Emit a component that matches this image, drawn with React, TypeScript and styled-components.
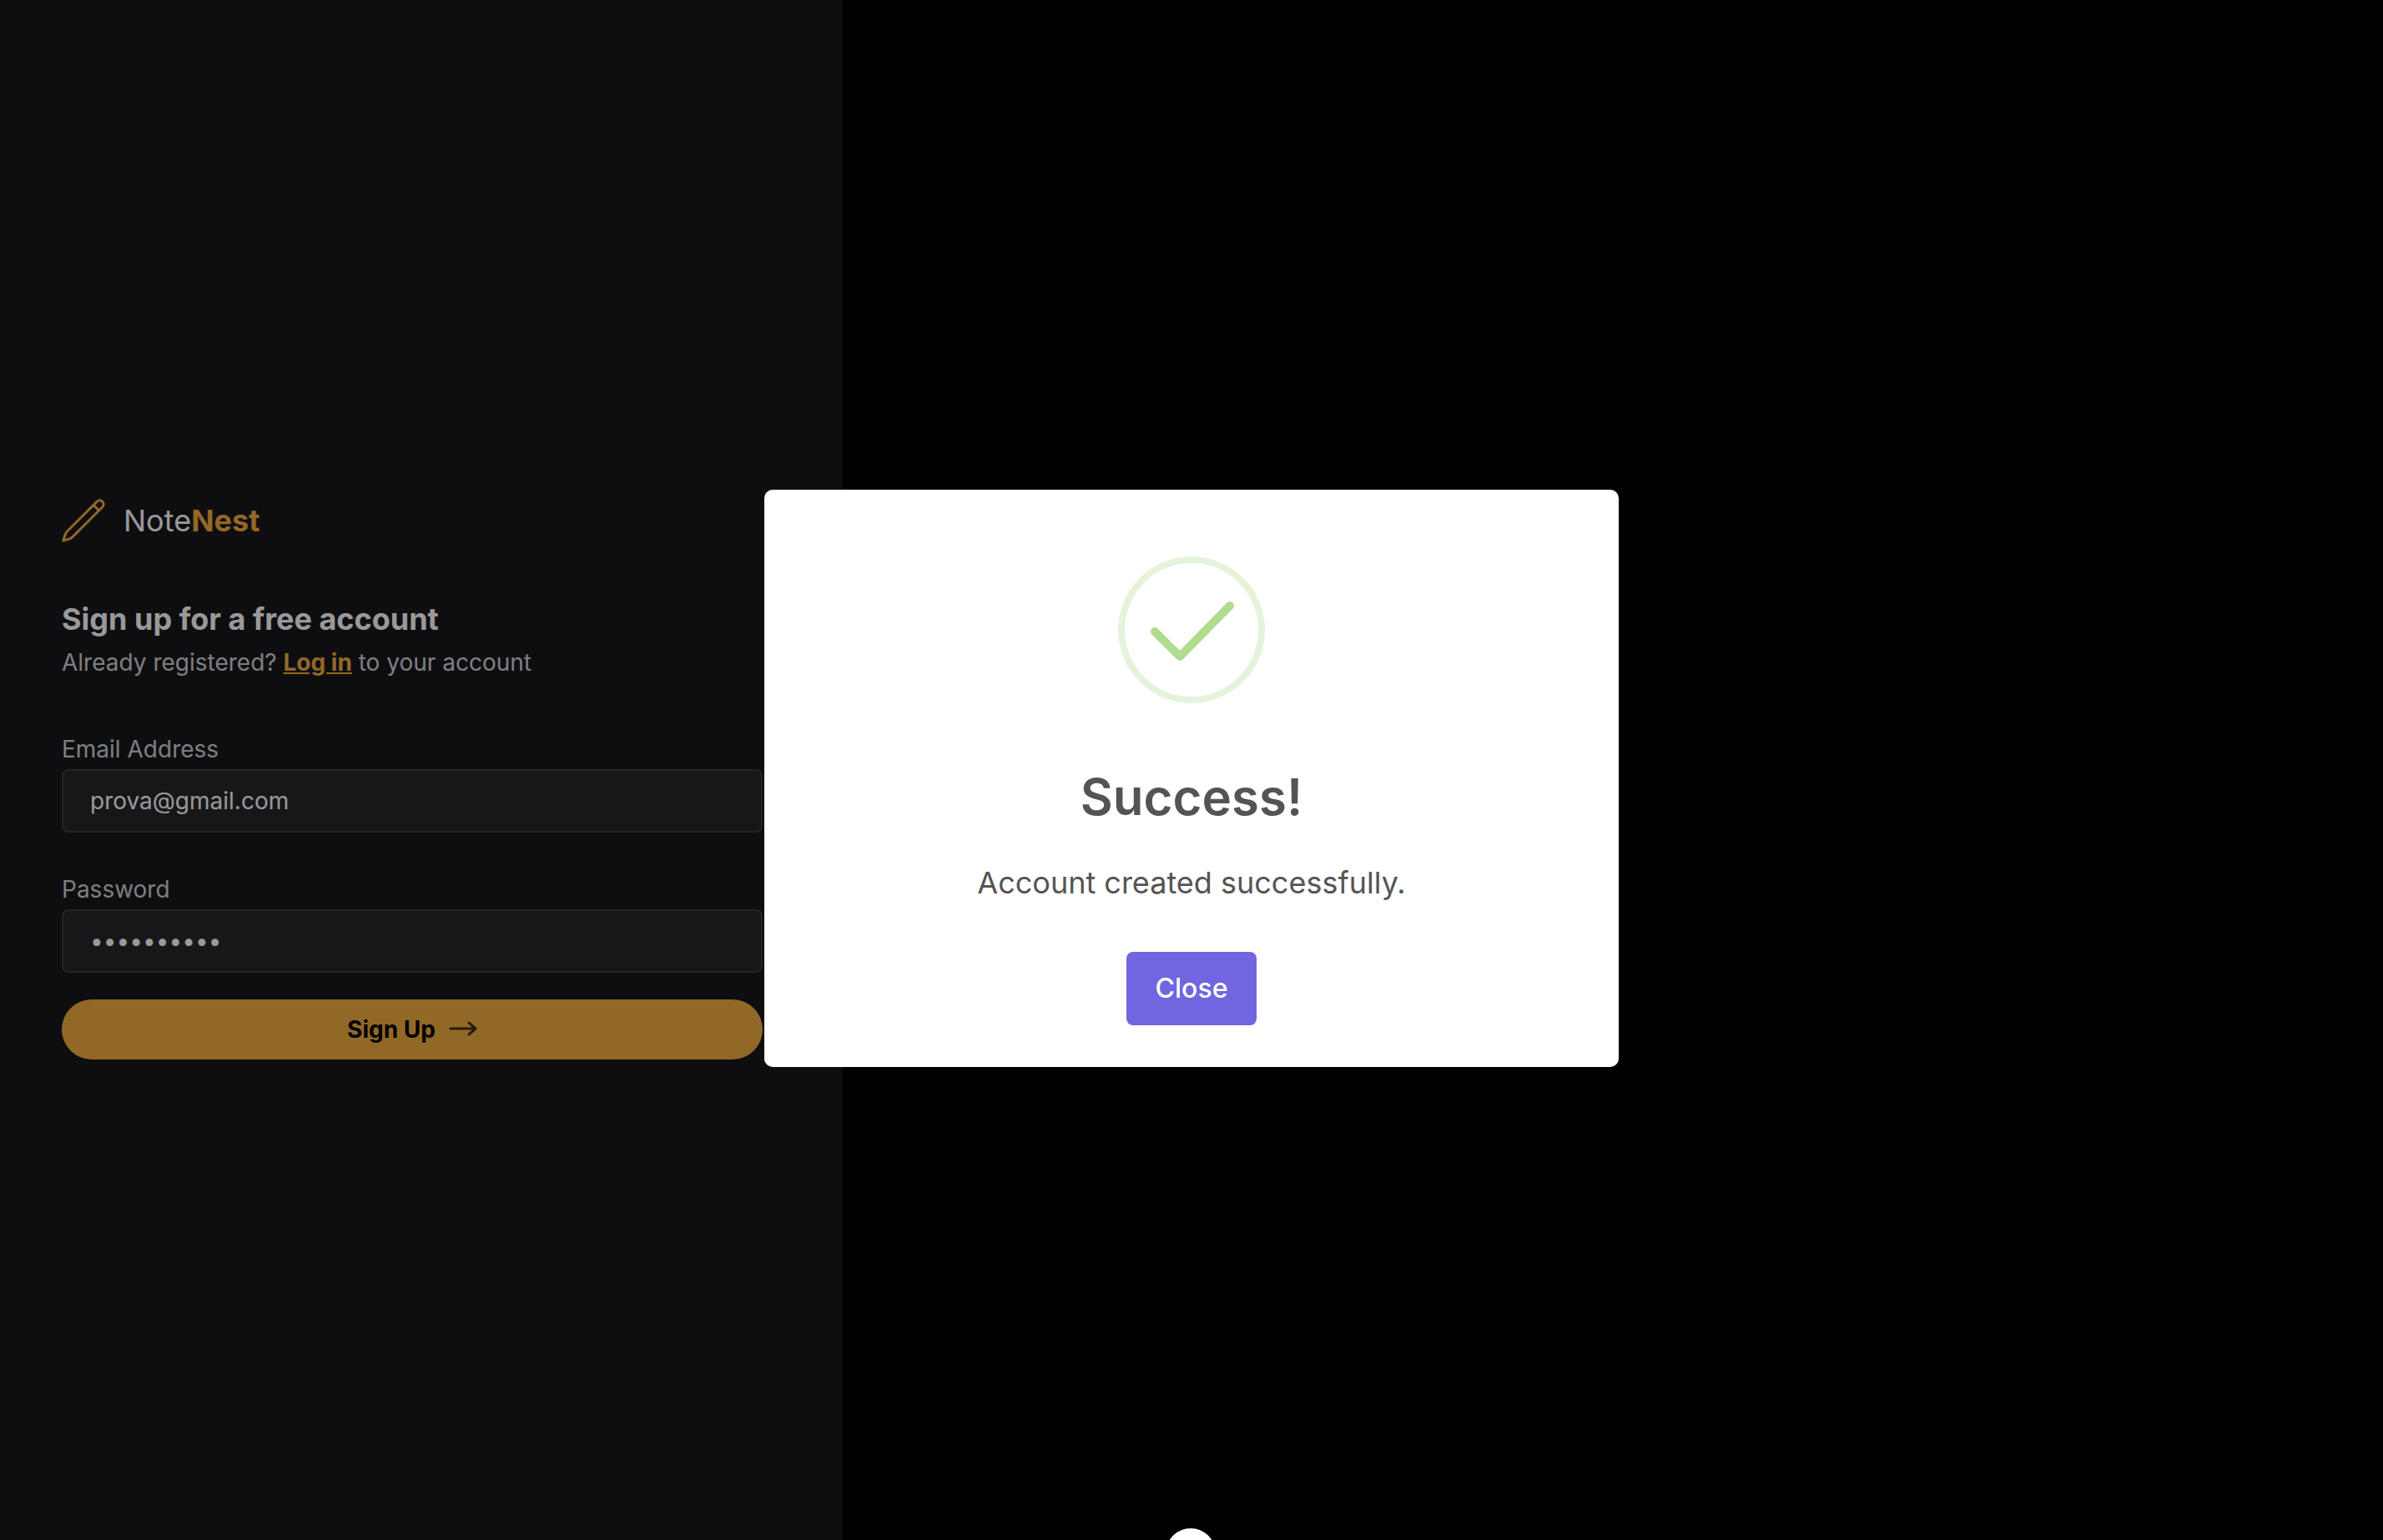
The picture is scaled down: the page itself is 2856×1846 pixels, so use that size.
import React, { useState } from "react";
import styled, { createGlobalStyle } from "styled-components";

const GlobalStyle = createGlobalStyle`
  *, *::before, *::after { box-sizing: border-box; }
  html, body, #root { height: 100%; }
  body {
    margin: 0;
    background: #000;
    font-family: Inter, "Liberation Sans", sans-serif;
    overflow: hidden;
  }
`;

const Page = styled.div`
  display: flex;
  min-height: 100vh;
  background: #000;
`;

const Panel = styled.main`
  display: flex;
  flex-direction: column;
  justify-content: center;
  padding: 18px 96px 0 74px;
  background: #18181b;
`;

const Content = styled.div`
  display: flex;
  flex-direction: column;
  width: 840px;
  max-width: 100%;
`;

const Brand = styled.div`
  display: flex;
  align-items: center;
  gap: 22px;
  height: 60px;
  color: #fff;
  font-size: 36px;
  line-height: 56px;
`;

const BrandAccent = styled.span`
  color: #f4ae41;
  font-weight: 700;
`;

const PencilIcon = styled.svg`
  width: 52px;
  height: 52px;
  color: #f4ae41;
`;

const Heading = styled.h1`
  margin: 60px 0 0;
  color: #fff;
  font-size: 36px;
  line-height: 56px;
  font-weight: 700;
`;

const Subtitle = styled.p`
  margin: 4px 0 0;
  color: #d4d4d8;
  font-size: 28px;
  line-height: 40px;
`;

const LoginLink = styled.a`
  color: #f4ae41;
  font-weight: 700;
  text-decoration: underline;
`;

const Form = styled.form`
  display: flex;
  flex-direction: column;
  gap: 48px;
  margin-top: 64px;
`;

const Field = styled.div`
  display: flex;
  flex-direction: column;
  gap: 4px;
`;

const Label = styled.label`
  color: #d4d4d8;
  font-size: 28px;
  line-height: 40px;
`;

const Input = styled.input`
  width: 100%;
  height: 76px;
  padding: 0 32px;
  border: 2px solid #3f3f46;
  border-radius: 8px;
  background: #27272a;
  color: #fff;
  font-family: inherit;
  font-size: 28px;
  line-height: 40px;
  outline: none;
`;

const SubmitButton = styled.button`
  display: flex;
  align-items: center;
  justify-content: center;
  gap: 16px;
  height: 72px;
  margin-top: 32px;
  border: 0;
  border-radius: 36px;
  background: #f4ae41;
  color: #000;
  font-family: inherit;
  font-size: 28px;
  line-height: 40px;
  font-weight: 700;
`;

const ArrowIcon = styled.svg`
  width: 34px;
  height: 20px;
`;

const Overlay = styled.div`
  position: fixed;
  inset: 0;
  display: flex;
  align-items: center;
  justify-content: center;
  padding: 20px;
  background: rgba(0, 0, 0, 0.4);
`;

const Dialog = styled.div`
  display: flex;
  flex-direction: column;
  align-items: center;
  width: 1024px;
  max-width: 100%;
  padding: 80px 0 50px;
  border-radius: 10px;
  background: #fff;
  color: #545454;
  text-align: center;
  margin-top: 20px;
`;

const SuccessIcon = styled.svg`
  width: 176px;
  height: 176px;
`;

const DialogTitle = styled.h2`
  margin: 76px 0 0;
  font-size: 60px;
  line-height: 72px;
  font-weight: 600;
`;

const DialogText = styled.p`
  margin: 40px 0 0;
  font-size: 36px;
  line-height: 54px;
`;

const CloseButton = styled.button`
  height: 88px;
  margin-top: 56px;
  padding: 0 35px;
  border: 0;
  border-radius: 8px;
  background: #7066e0;
  color: #fff;
  font-family: inherit;
  font-size: 32px;
  line-height: 40px;
  font-weight: 500;
`;

const HelpButton = styled.button`
  position: fixed;
  bottom: -46px;
  left: 50%;
  width: 60px;
  height: 60px;
  margin-left: -31px;
  padding: 0;
  border: 0;
  border-radius: 50%;
  background: #fff;
`;

export default function App() {
  const [email, setEmail] = useState("prova@gmail.com");
  const [password, setPassword] = useState("password12");
  const [open, setOpen] = useState(true);

  return (
    <>
      <GlobalStyle />
      <Page>
        <Panel>
          <Content>
            <Brand>
              <PencilIcon viewBox="1.5 1.5 21 21" fill="none" stroke="currentColor" strokeWidth="1.2" strokeLinecap="round" strokeLinejoin="round" aria-hidden="true">
                <path d="m16.862 4.487 1.687-1.688a1.875 1.875 0 1 1 2.652 2.652L6.832 19.82a4.5 4.5 0 0 1-1.897 1.13l-2.685.8.8-2.685a4.5 4.5 0 0 1 1.13-1.897L16.863 4.487Zm0 0L19.5 7.125" />
              </PencilIcon>
              <span>Note<BrandAccent>Nest</BrandAccent></span>
            </Brand>
            <Heading>Sign up for a free account</Heading>
            <Subtitle>
              Already registered? <LoginLink href="#login">Log in</LoginLink> to your account
            </Subtitle>
            <Form id="signup" onSubmit={(e) => e.preventDefault()}>
              <Field>
                <Label htmlFor="email">Email Address</Label>
                <Input id="email" type="email" value={email} onChange={(e) => setEmail(e.target.value)} />
              </Field>
              <Field>
                <Label htmlFor="password">Password</Label>
                <Input id="password" type="password" value={password} onChange={(e) => setPassword(e.target.value)} />
              </Field>
            </Form>
            <SubmitButton type="submit" form="signup">
              Sign Up
              <ArrowIcon viewBox="0 0 34 20" fill="none" stroke="#42300f" strokeWidth="3" strokeLinecap="round" strokeLinejoin="round" aria-hidden="true">
                <path d="M2 9h30M24 2l8 7-8 7" />
              </ArrowIcon>
            </SubmitButton>
          </Content>
        </Panel>
      </Page>
      {open && (
        <Overlay>
          <Dialog role="dialog" aria-modal="true" aria-labelledby="dialog-title">
            <SuccessIcon viewBox="0 0 176 176" fill="none" aria-hidden="true">
              <circle cx="88" cy="88" r="84" stroke="#e5f3dd" strokeWidth="8" />
              <path d="M44 90l30 30 60-61" stroke="#afdc8f" strokeWidth="10" strokeLinecap="round" strokeLinejoin="round" />
            </SuccessIcon>
            <DialogTitle id="dialog-title">Success!</DialogTitle>
            <DialogText>Account created successfully.</DialogText>
            <CloseButton type="button" onClick={() => setOpen(false)}>Close</CloseButton>
          </Dialog>
        </Overlay>
      )}
      <HelpButton type="button" aria-label="Help" />
    </>
  );
}
